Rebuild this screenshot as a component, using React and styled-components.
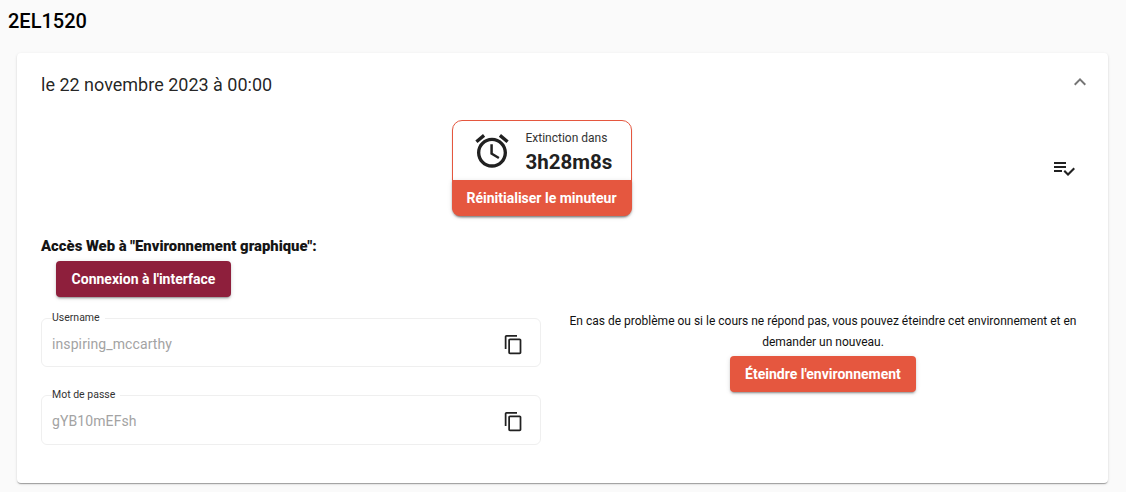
import React from "react";
import styled, { createGlobalStyle } from "styled-components";

const GlobalStyle = createGlobalStyle`
  html, body {
    margin: 0;
    padding: 0;
    background: #fafafa;
    font-family: Roboto, "Liberation Sans", sans-serif;
    color: rgba(0, 0, 0, 0.87);
  }
`;

const Page = styled.div`
  width: 1126px;
  height: 492px;
  overflow: hidden;
  box-sizing: border-box;
  padding: 8px 18px 0 17px;
`;

const CourseCode = styled.h2`
  margin: 0 0 19px -9px;
  font-size: 20px;
  line-height: 26px;
  font-weight: 500;
  color: #000;
`;

const Card = styled.section`
  height: 430px;
  box-sizing: border-box;
  background: #fff;
  border-radius: 4px;
  box-shadow: 0 2px 1px -1px rgba(0, 0, 0, 0.2), 0 1px 1px 0 rgba(0, 0, 0, 0.14),
    0 1px 3px 0 rgba(0, 0, 0, 0.12);
  padding: 0 24px;
`;

const CardHeader = styled.header`
  height: 62px;
  display: flex;
  align-items: center;
  justify-content: space-between;
  font-size: 18px;
  color: rgba(0, 0, 0, 0.87);
`;

const TopRow = styled.div`
  display: flex;
  align-items: center;
  margin-top: 5px;
`;

const TimerSlot = styled.div`
  flex: 1;
  display: flex;
  justify-content: center;
  padding-right: 2px;
`;

const TimerCard = styled.div`
  width: 180px;
  box-sizing: border-box;
  border: 1px solid #e5573f;
  border-radius: 10px;
  box-shadow: 0 2px 2px rgba(0, 0, 0, 0.14);
`;

const TimerBody = styled.div`
  height: 59px;
  display: flex;
  align-items: center;
  gap: 14px;
  padding-left: 19px;
`;

const TimerText = styled.div`
  display: flex;
  flex-direction: column;
  gap: 5px;
  padding-top: 3px;
`;

const TimerLabel = styled.span`
  font-size: 12px;
  line-height: 14px;
  color: #333;
`;

const TimerValue = styled.span`
  font-size: 20.5px;
  line-height: 24px;
  font-weight: 700;
  color: #212121;
`;

const ActionButton = styled.button`
  display: block;
  border: 0;
  margin: 0;
  padding: 0;
  width: ${(p) => p.$width}px;
  height: 36px;
  border-radius: 4px;
  background: ${(p) => p.$bg || "#e5573f"};
  color: #fff;
  font-family: inherit;
  font-size: 14px;
  font-weight: 700;
  box-shadow: 0 3px 1px -2px rgba(0, 0, 0, 0.2), 0 2px 2px 0 rgba(0, 0, 0, 0.14),
    0 1px 5px 0 rgba(0, 0, 0, 0.12);
`;

const ResetButton = styled(ActionButton)`
  margin: 0 -1px -1px;
  border-radius: 0 0 8px 8px;
`;

const IconBox = styled.div`
  width: 40px;
  height: 40px;
  display: flex;
  align-items: center;
  justify-content: center;
  color: ${(p) => p.$color || "#212121"};
  flex: none;
`;

const CollapseBox = styled(IconBox)`
  margin: -4px -16px 0 0;
`;

const Columns = styled.div`
  display: grid;
  grid-template-columns: 500px 522px;
  column-gap: 21px;
  margin-top: 22px;
`;

const AccessTitle = styled.h4`
  margin: 0 0 6px;
  font-size: 14.85px;
  line-height: 17px;
  font-weight: 900;
  color: #151515;
`;

const ConnectWrap = styled.div`
  padding-left: 15px;
  margin-bottom: 15px;
`;

const CredentialBox = styled.fieldset`
  margin: 0 0 ${(p) => p.$gap}px;
  padding: 0 0 0 10px;
  height: ${(p) => p.$height}px;
  box-sizing: border-box;
  border: 1px solid #efefef;
  border-radius: 6px;
  position: relative;
`;

const CredentialLegend = styled.legend`
  font-size: 10.5px;
  line-height: 12px;
  padding: 0 5px 0 0;
  color: #333;
`;

const CredentialValue = styled.span`
  font-size: 14px;
  color: #a3a3a3;
  letter-spacing: 0.1px;
  position: absolute;
  left: 10px;
  top: 12px;
`;

const CopyBox = styled(IconBox)`
  position: absolute;
  right: 7px;
  top: 0;
`;

const HelpColumn = styled.div`
  display: flex;
  flex-direction: column;
  align-items: center;
  padding-top: 73px;
`;

const HelpText = styled.p`
  margin: 0 0 3px;
  font-size: 12px;
  line-height: 21px;
  text-align: center;
  color: #111;
`;

const Icon = ({ d, size = 24 }) => (
  <svg width={size} height={size} viewBox="0 0 24 24" fill="currentColor">
    <path d={d} />
  </svg>
);

const paths = {
  alarm:
    "M22 5.72l-4.6-3.86-1.29 1.53 4.6 3.86L22 5.72zM7.88 3.39L6.6 1.86 2 5.71l1.29 1.53 4.59-3.85zM12.5 8H11v6l4.75 2.85.75-1.23-4-2.37V8zM12 4c-4.97 0-9 4.03-9 9s4.02 9 9 9c4.97 0 9-4.03 9-9s-4.03-9-9-9zm0 16c-3.87 0-7-3.13-7-7s3.13-7 7-7 7 3.13 7 7-3.13 7-7 7z",
  checklist:
    "M14 10H2v2h12v-2zm0-4H2v2h12V6zM2 16h8v-2H2v2zm19.5-4.5L23 13l-6.99 7-4.51-4.5L13 14l3.01 3 5.49-5.5z",
  copy: "M16 1H4c-1.1 0-2 .9-2 2v14h2V3h12V1zm3 4H8c-1.1 0-2 .9-2 2v14c0 1.1.9 2 2 2h11c1.1 0 2-.9 2-2V7c0-1.1-.9-2-2-2zm0 16H8V7h11v14z",
  expandLess: "M12 8l-6 6 1.41 1.41L12 10.83l4.59 4.58L18 14z",
};

const Credential = ({ label, value, gap, height }) => (
  <CredentialBox $gap={gap} $height={height}>
    <CredentialLegend>{label}</CredentialLegend>
    <CredentialValue>{value}</CredentialValue>
    <CopyBox>
      <Icon d={paths.copy} size={21} />
    </CopyBox>
  </CredentialBox>
);

export default function App() {
  return (
    <Page>
      <GlobalStyle />
      <CourseCode>2EL1520</CourseCode>
      <Card>
        <CardHeader>
          <span>le 22 novembre 2023 à 00:00</span>
          <CollapseBox $color="#757575">
            <Icon d={paths.expandLess} />
          </CollapseBox>
        </CardHeader>
        <TopRow>
          <TimerSlot>
            <TimerCard>
              <TimerBody>
                <IconBox>
                  <Icon d={paths.alarm} size={46} />
                </IconBox>
                <TimerText>
                  <TimerLabel>Extinction dans</TimerLabel>
                  <TimerValue>3h28m8s</TimerValue>
                </TimerText>
              </TimerBody>
              <ResetButton $width={180}>Réinitialiser le minuteur</ResetButton>
            </TimerCard>
          </TimerSlot>
          <IconBox>
            <Icon d={paths.checklist} />
          </IconBox>
        </TopRow>
        <Columns>
          <div>
            <AccessTitle>Accès Web à "Environnement graphique":</AccessTitle>
            <ConnectWrap>
              <ActionButton $width={175} $bg="#8e1f3c">
                Connexion à l'interface
              </ActionButton>
            </ConnectWrap>
            <Credential label="Username" value="inspiring_mccarthy" gap={22} height={55} />
            <Credential label="Mot de passe" value="gYB10mEFsh" gap={0} height={56} />
          </div>
          <HelpColumn>
            <HelpText>
              En cas de problème ou si le cours ne répond pas, vous pouvez éteindre cet environnement et en demander un nouveau.
            </HelpText>
            <ActionButton $width={186}>Éteindre l'environnement</ActionButton>
          </HelpColumn>
        </Columns>
      </Card>
    </Page>
  );
}
